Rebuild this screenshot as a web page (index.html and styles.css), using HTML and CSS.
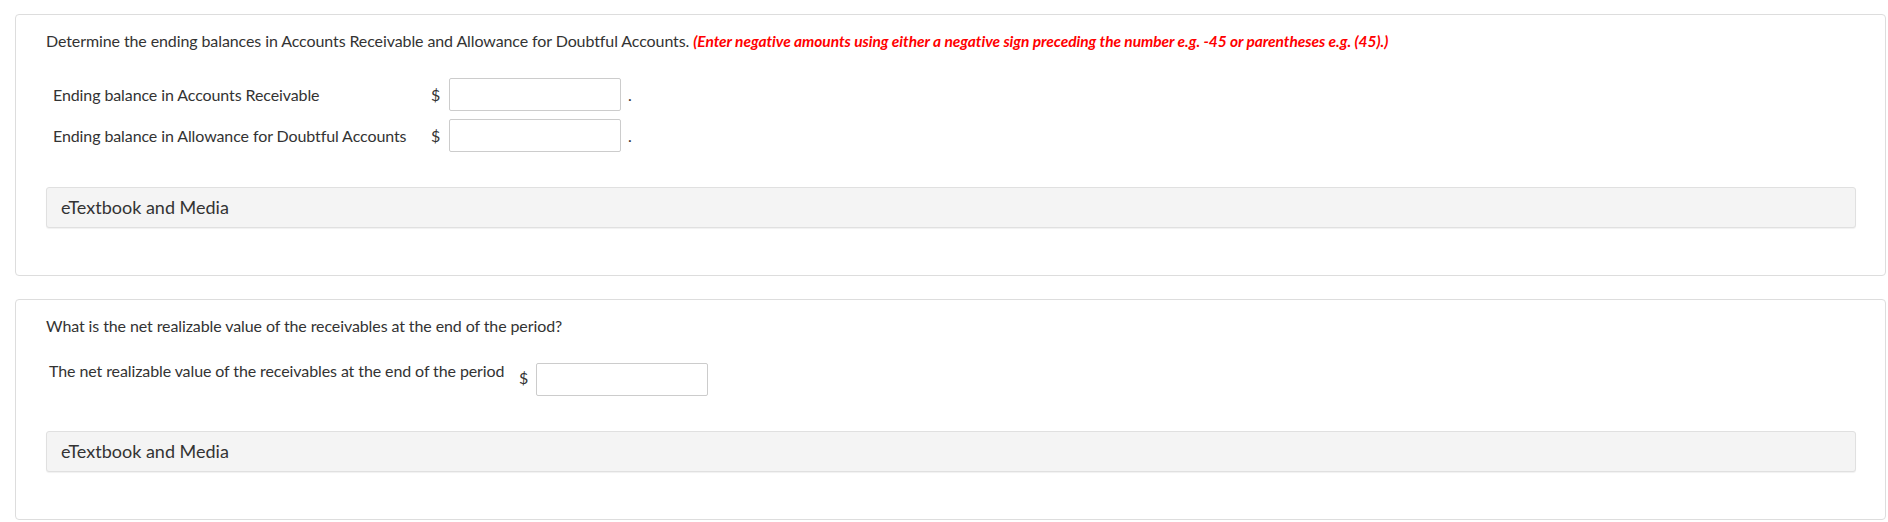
FILE: index.html
```html
<!DOCTYPE html>
<html lang="en">
<head>
<meta charset="utf-8">
<title>Receivables</title>
<link rel="stylesheet" href="styles.css">
</head>
<body>
<main class="page">
  <section class="card">
    <p class="prompt">Determine the ending balances in Accounts Receivable and Allowance for Doubtful Accounts. <span class="hint">(Enter negative amounts using either a negative sign preceding the number e.g. -45 or parentheses e.g. (45).)</span></p>
    <div class="answers answers-a">
      <span class="label">Ending balance in Accounts Receivable</span>
      <span class="cur">$</span>
      <input class="amount" type="text" aria-label="Ending balance in Accounts Receivable">
      <span class="dot">.</span>
      <span class="label">Ending balance in Allowance for Doubtful Accounts</span>
      <span class="cur">$</span>
      <input class="amount" type="text" aria-label="Ending balance in Allowance for Doubtful Accounts">
      <span class="dot">.</span>
    </div>
    <div class="media">eTextbook and Media</div>
  </section>
  <section class="card">
    <p class="prompt">What is the net realizable value of the receivables at the end of the period?</p>
    <div class="answers answers-b">
      <span class="label">The net realizable value of the receivables at the end of the period</span>
      <span class="cur">$</span>
      <input class="amount" type="text" aria-label="The net realizable value of the receivables at the end of the period">
    </div>
    <div class="media">eTextbook and Media</div>
  </section>
</main>
</body>
</html>
```
FILE: styles.css
```css
* { box-sizing: border-box; }

html, body {
  margin: 0;
  background: #ffffff;
}

body {
  font-family: Lato, "Open Sans", "Liberation Sans", sans-serif;
  font-size: 16px;
  line-height: 20px;
  color: #333333;
}

.page {
  display: flex;
  flex-direction: column;
  gap: 23px;
  padding: 14px 2px 0 15px;
}

.card {
  border: 1px solid #dddddd;
  border-radius: 4px;
  background: #ffffff;
  padding: 16px 29px 47px 30px;
}

.prompt {
  margin: 0;
  height: 20px;
  white-space: nowrap;
  letter-spacing: -0.1px;
}

.hint {
  color: #ff0000;
  font-weight: 700;
  font-style: italic;
  font-size: 15.5px;
  letter-spacing: -0.05px;
}

.answers {
  display: grid;
  justify-content: start;
}

.answers-a {
  margin-top: 27px;
  margin-bottom: 35px;
  padding-left: 7px;
  grid-template-columns: 378px 18px 172px auto;
  row-gap: 8px;
  align-items: center;
}

.answers-b {
  margin-top: 25px;
  margin-bottom: 35px;
  padding-left: 3px;
  grid-template-columns: 470px 17px 172px;
  align-items: start;
  height: 35px;
}

.label {
  white-space: nowrap;
  letter-spacing: -0.1px;
}

.cur {
  line-height: 20px;
}

.answers-b .cur {
  margin-top: 7px;
}

.answers-b .amount {
  margin-top: 2px;
}

.amount {
  display: block;
  width: 172px;
  height: 33px;
  margin: 0;
  padding: 4px 8px;
  border: 1px solid #cccccc;
  border-radius: 2px;
  background: #ffffff;
  font: inherit;
  color: #333333;
  outline: none;
}

.dot {
  margin-left: 7px;
}

.media {
  height: 41px;
  border: 1px solid #e0e0e0;
  border-radius: 3px;
  background: #f4f4f4;
  box-shadow: 0 1px 1px rgba(0, 0, 0, 0.06);
  padding-left: 14px;
  font-size: 18px;
  line-height: 39px;
  color: #333333;
}
```
